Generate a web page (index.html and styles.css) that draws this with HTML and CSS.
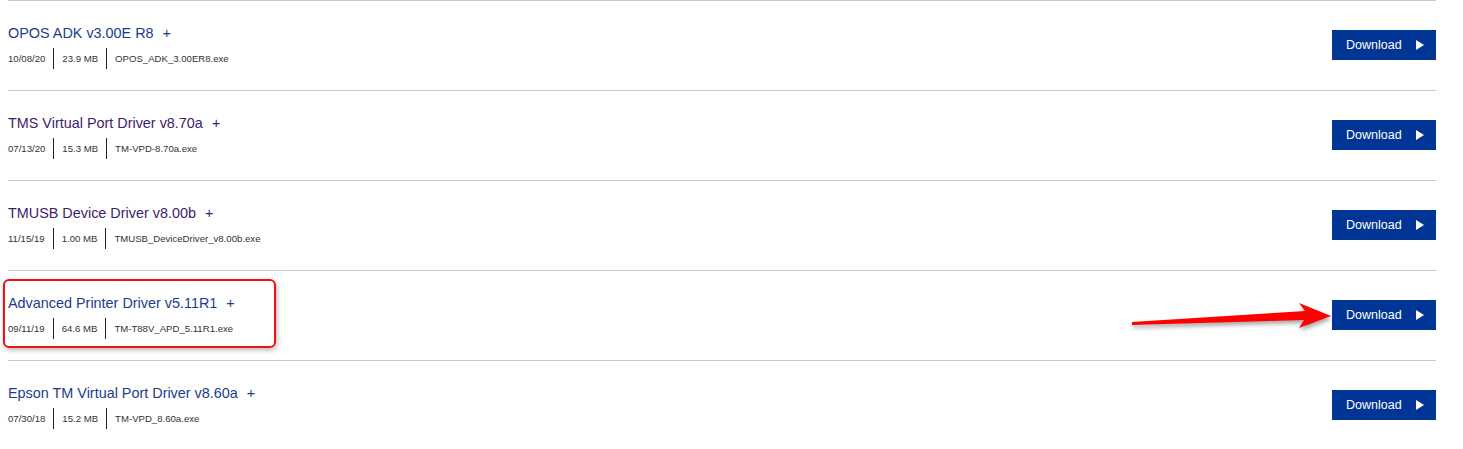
FILE: index.html
```html
<!DOCTYPE html>
<html lang="en">
<head>
    <meta charset="UTF-8">
    <meta name="viewport" content="width=device-width, initial-scale=1.0">
    <title>Downloads</title>
    <link rel="stylesheet" href="styles.css">
</head>
<body>
    <div class="list">
        <div class="row">
            <div class="info">
                <a class="title" href="#">OPOS ADK v3.00E R8<span class="plus">+</span></a>
                <div class="meta">
                    <span>10/08/20</span>
                    <span>23.9 MB</span>
                    <span>OPOS_ADK_3.00ER8.exe</span>
                </div>
            </div>
            <a class="btn" href="#">Download<span class="arrow"></span></a>
        </div>
        <div class="row">
            <div class="info">
                <a class="title visited" href="#">TMS Virtual Port Driver v8.70a<span class="plus">+</span></a>
                <div class="meta">
                    <span>07/13/20</span>
                    <span>15.3 MB</span>
                    <span>TM-VPD-8.70a.exe</span>
                </div>
            </div>
            <a class="btn" href="#">Download<span class="arrow"></span></a>
        </div>
        <div class="row">
            <div class="info">
                <a class="title visited" href="#">TMUSB Device Driver v8.00b<span class="plus">+</span></a>
                <div class="meta">
                    <span>11/15/19</span>
                    <span>1.00 MB</span>
                    <span>TMUSB_DeviceDriver_v8.00b.exe</span>
                </div>
            </div>
            <a class="btn" href="#">Download<span class="arrow"></span></a>
        </div>
        <div class="row marked">
            <div class="info">
                <a class="title" href="#">Advanced Printer Driver v5.11R1<span class="plus">+</span></a>
                <div class="meta">
                    <span>09/11/19</span>
                    <span>64.6 MB</span>
                    <span>TM-T88V_APD_5.11R1.exe</span>
                </div>
            </div>
            <div class="highlight"></div>
            <svg class="pointer" width="220" height="40" viewBox="0 0 220 40">
                <path d="M8 23 L181 12 L175 4 L207 17 L175 29 L180 21 L8 26 Z" fill="#f00"/>
            </svg>
            <a class="btn" href="#">Download<span class="arrow"></span></a>
        </div>
        <div class="row">
            <div class="info">
                <a class="title" href="#">Epson TM Virtual Port Driver v8.60a<span class="plus">+</span></a>
                <div class="meta">
                    <span>07/30/18</span>
                    <span>15.2 MB</span>
                    <span>TM-VPD_8.60a.exe</span>
                </div>
            </div>
            <a class="btn" href="#">Download<span class="arrow"></span></a>
        </div>
    </div>
</body>
</html>
```

FILE: styles.css
```css
*{
    margin: 0;
    padding: 0;
    box-sizing: border-box;
}
body{
    background: #fff;
    font-family: "Liberation Sans", Arial, sans-serif;
}
.list{
    width: 1428px;
    margin-left: 8px;
}
.row{
    position: relative;
    height: 90px;
    border-top: 1px solid #c9c9c9;
    display: flex;
    justify-content: space-between;
    align-items: center;
}
.info{
    display: flex;
    flex-direction: column;
    align-self: flex-start;
    padding-top: 22px;
}
.title{
    font-size: 14.4px;
    line-height: 20px;
    color: #1b3c8e;
    text-decoration: none;
}
.title.visited{
    color: #3d2170;
}
.plus{
    margin-left: 9px;
}
.meta{
    display: flex;
    margin-top: 5px;
    height: 21px;
    align-items: center;
    font-size: 9.6px;
    color: #333;
}
.meta span{
    display: flex;
    align-items: center;
    height: 21px;
    padding: 0 8px;
    border-left: 1px solid #222;
}
.meta span:first-child{
    padding-left: 0;
    border-left: none;
}
.btn{
    display: flex;
    align-items: center;
    width: 104px;
    height: 30px;
    padding-left: 14px;
    background: #003595;
    color: #fff;
    font-size: 12.5px;
    text-decoration: none;
    margin-top: -1px;
}
.arrow{
    width: 0;
    height: 0;
    margin-left: 14px;
    border-top: 5px solid transparent;
    border-bottom: 5px solid transparent;
    border-left: 8px solid #fff;
}
.highlight{
    position: absolute;
    left: -5px;
    top: 8px;
    width: 273px;
    height: 69px;
    border: 2px solid #ee1111;
    border-radius: 6px;
    box-shadow: 1px 2px 5px rgba(0,0,0,0.3);
}
.pointer{
    position: absolute;
    left: 1116px;
    top: 28px;
    filter: drop-shadow(1px 3px 2px rgba(0,0,0,0.35));
}
```
